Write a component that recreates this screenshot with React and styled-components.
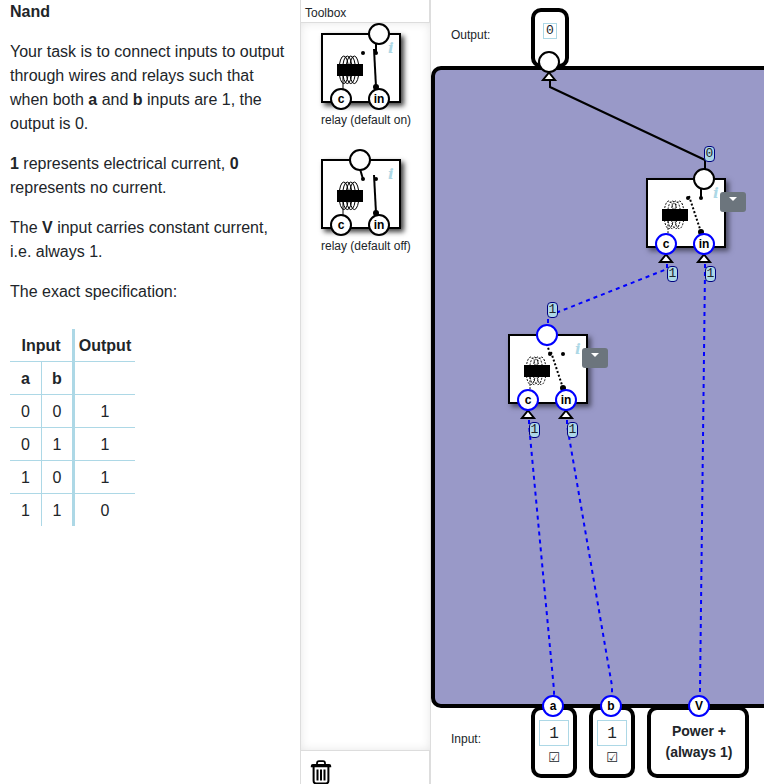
import React from "react";
import styled, { createGlobalStyle } from "styled-components";

const GlobalStyle = createGlobalStyle`
  *, *::before, *::after { box-sizing: border-box; }
  html, body { margin: 0; height: 784px; overflow: hidden; background: #fff; }
  body {
    font-family: "Liberation Sans", Arial, sans-serif;
    font-size: 16px;
    line-height: 24px;
    color: #212529;
  }
`;

const Layout = styled.div`
  display: grid;
  grid-template-columns: 300px 130px 334px;
  width: 764px;
  height: 784px;
  overflow: hidden;
`;

const Instructions = styled.section`
  padding: 0 10px;
`;

const Paragraph = styled.p`
  margin: 0 0 16px;
`;

const TruthTable = styled.table`
  margin-top: 25px;
  width: 125px;
  table-layout: fixed;
  border-collapse: separate;
  border-spacing: 0;
  text-align: center;
`;

const Column = styled.col`
  width: ${(p) => p.$width}px;
`;

const Cell = styled.td`
  height: ${(p) => (p.$last ? 32 : 33)}px;
  padding: 5px 0 3px;
  font-weight: ${(p) => (p.$head ? 700 : 400)};
  border-bottom: ${(p) => (p.$last ? "0" : "1px solid lightblue")};
  border-right: ${(p) => (p.$edge ? `${p.$edge}px solid lightblue` : "0")};
`;

const Toolbox = styled.aside`
  display: flex;
  flex-direction: column;
  border-left: 1px solid #ddd;
`;

const ToolboxTitle = styled.div`
  height: 23px;
  padding: 2px 4px 0;
  font-size: 12px;
  line-height: 22px;
  border-right: 1px solid #ddd;
  border-bottom: 1px solid #ddd;
`;

const ToolList = styled.div`
  flex: none;
  height: 727px;
  display: flex;
  flex-direction: column;
  align-items: flex-start;
  gap: 26px;
  padding: 10px 0 0 20px;
  box-shadow: inset 0 0 10px rgba(0, 0, 0, 0.1);
`;

const Tool = styled.div`
  height: 100px;
  font-size: 12px;
  white-space: nowrap;
`;

const ToolName = styled.div`
  padding-top: 8px;
  line-height: 18px;
`;

const TrashBar = styled.div`
  flex: 1;
  padding: 9px 0 0 9px;
  border-top: 1px solid #ddd;
  border-right: 1px solid #ddd;
  svg { display: block; }
`;

const Workspace = styled.main`
  position: relative;
  display: flex;
  flex-direction: column;
  border-left: 1px solid #ddd;
  overflow: hidden;
`;

const TerminalRow = styled.div`
  display: flex;
  gap: 12px;
  height: ${(p) => p.$height}px;
  padding: ${(p) => p.$top}px 0 0 20px;
`;

const RowLabel = styled.div`
  width: 68px;
  padding-top: ${(p) => p.$top}px;
  font-size: 12px;
  line-height: 18px;
`;

const Terminal = styled.div`
  position: relative;
  flex: none;
  display: flex;
  flex-direction: column;
  align-items: center;
  width: ${(p) => p.$width}px;
  height: ${(p) => p.$height}px;
  padding-top: ${(p) => p.$top}px;
  border: 4px solid #000;
  border-radius: 10px;
  background: #fff;
`;

const InputTerminal = styled(Terminal)`
  margin-top: -2px;
`;

const ValueBox = styled.div`
  width: ${(p) => (p.$small ? 14 : 30)}px;
  height: ${(p) => (p.$small ? 16 : 26)}px;
  border: 1px solid lightblue;
  font-family: "Liberation Mono", monospace;
  font-size: ${(p) => (p.$small ? 13 : 16)}px;
  line-height: ${(p) => (p.$small ? 14 : 26)}px;
  text-align: center;
`;

const Check = styled.div`
  padding-top: 1px;
  font-family: "DejaVu Sans", sans-serif;
  font-size: 13px;
  line-height: 21px;
`;

const PowerLabel = styled.div`
  padding: 1px 0 0 2px;
  font-size: 14px;
  font-weight: 700;
  line-height: 21px;
  text-align: center;
`;

const Canvas = styled.div`
  flex: none;
  width: 500px;
  height: 642px;
  border: 4px solid #000;
  border-radius: 10px;
  background: #9999c8;
`;

const Port = styled.div`
  position: absolute;
  left: ${(p) => p.$x - 11}px;
  top: ${(p) => p.$y - 11}px;
  z-index: 3;
  width: 22px;
  height: 22px;
  border: 2px solid ${(p) => (p.$live ? "#0000ff" : "#000")};
  border-radius: 50%;
  background: #fff;
  color: #000;
  font-size: 12px;
  font-weight: 700;
  line-height: 18px;
  text-align: center;
`;

const RelayBox = styled.div`
  position: relative;
  width: 80px;
  height: 70px;
  border: 2px solid #000;
  background: #fff;
  box-shadow: 3px 3px 5px rgba(0, 0, 0, ${(p) => (p.$placed ? 0.5 : 0.75)});
`;

const RelayArt = styled.svg`
  display: block;
  width: 76px;
  height: 66px;
`;

const Info = styled.span`
  position: absolute;
  left: 65px;
  top: 4px;
  color: lightblue;
  font: italic 700 15px/18px "DejaVu Serif", serif;
`;

const Placed = styled.div`
  position: absolute;
  left: ${(p) => p.$x - 431}px;
  top: ${(p) => p.$y}px;
`;

const MenuButton = styled.button`
  position: absolute;
  left: 72px;
  top: 12px;
  z-index: 4;
  display: flex;
  justify-content: center;
  align-items: flex-start;
  width: 26px;
  height: 20px;
  padding: 5px 0 0;
  border: 0;
  border-radius: 3px;
  background: #6c757d;
  &::after {
    content: "";
    border: 4px solid transparent;
    border-top-color: #fff;
    border-bottom: 0;
  }
`;

const Wires = styled.svg`
  position: absolute;
  left: -1px;
  top: 0;
  z-index: 2;
  pointer-events: none;
`;

const Signal = styled.div`
  position: absolute;
  left: ${(p) => p.$x - 431}px;
  top: ${(p) => p.$y}px;
  z-index: 4;
  display: flex;
  justify-content: center;
  width: 11px;
  height: 16px;
  border: 1px solid #000080;
  border-radius: 4px;
  background: lightblue;
  font: 13px/14px "Liberation Mono", monospace;
`;

function Relay({ kind, energized, outputLive, inputLive, placed }) {
  const onType = kind === "on";
  return (
    <RelayBox $placed={placed}>
      <RelayArt viewBox="2 2 76 66" aria-hidden="true">
        <g fill="none" stroke="#000" strokeWidth="1" strokeDasharray={energized ? "2 1.4" : undefined}>
          {[22.8, 26.3, 29.8, 33.3].map((x, i) => (
            <ellipse key={x} cx={x} cy="36.8" rx="4.7" ry="13.8" strokeDashoffset={i * 1.7} />
          ))}
          <path d="M22 43V58" />
        </g>
        <rect x="16" y="31" width="26" height="12" />
        <circle cx="42" cy="20" r="2" />
        <circle cx="55" cy="20" r="2" />
        <circle cx="55" cy="54" r="3" />
        {onType ? (
          <path d="M55 10V20" stroke="#000" strokeWidth="2" />
        ) : (
          <path
            d="M39 10L42 20"
            stroke="#000"
            strokeWidth="2"
            strokeDasharray={energized ? "2 2" : undefined}
          />
        )}
        {energized ? (
          <path d="M43 18L55 54" stroke="#000" strokeWidth="2" strokeDasharray="2 2" />
        ) : (
          <path d="M53 16L55 54" stroke="#000" strokeWidth="2" />
        )}
      </RelayArt>
      <Info>i</Info>
      <Port $x={onType ? 56 : 37} $y={-1} $live={outputLive} />
      <Port $x={18} $y={64} $live={inputLive}>c</Port>
      <Port $x={56} $y={64} $live={inputLive}>in</Port>
      {placed && <MenuButton aria-label="Relay menu" />}
    </RelayBox>
  );
}

const rows = [
  [0, 0, 1],
  [0, 1, 1],
  [1, 0, 1],
  [1, 1, 0],
];

const signals = [
  [704, 146, 0],
  [667, 266, 1],
  [705, 266, 1],
  [547, 302, 1],
  [529, 422, 1],
  [567, 422, 1],
];

const arrows = [
  [549, 72],
  [666, 254],
  [704, 254],
  [528, 410],
  [566, 410],
];

export default function App() {
  return (
    <>
      <GlobalStyle />
      <Layout>
        <Instructions>
          <Paragraph><b>Nand</b></Paragraph>
          <Paragraph>
            Your task is to connect inputs to output through wires and relays such that when both{" "}
            <b>a</b> and <b>b</b> inputs are 1, the output is 0.
          </Paragraph>
          <Paragraph><b>1</b> represents electrical current, <b>0</b> represents no current.</Paragraph>
          <Paragraph>The <b>V</b> input carries constant current, i.e. always 1.</Paragraph>
          <Paragraph>The exact specification:</Paragraph>
          <TruthTable>
            <colgroup>
              <Column $width={32} />
              <Column $width={33} />
              <Column $width={60} />
            </colgroup>
            <tbody>
              <tr>
                <Cell as="th" colSpan={2} $head $edge={3}>Input</Cell>
                <Cell as="th" $head>Output</Cell>
              </tr>
              <tr>
                <Cell as="th" $head $edge={1}>a</Cell>
                <Cell as="th" $head $edge={3}>b</Cell>
                <Cell />
              </tr>
              {rows.map(([a, b, out], i) => (
                <tr key={i}>
                  <Cell $edge={1} $last={i === 3}>{a}</Cell>
                  <Cell $edge={3} $last={i === 3}>{b}</Cell>
                  <Cell $last={i === 3}>{out}</Cell>
                </tr>
              ))}
            </tbody>
          </TruthTable>
        </Instructions>

        <Toolbox>
          <ToolboxTitle>Toolbox</ToolboxTitle>
          <ToolList>
            <Tool>
              <Relay kind="on" />
              <ToolName>relay (default on)</ToolName>
            </Tool>
            <Tool>
              <Relay kind="off" />
              <ToolName>relay (default off)</ToolName>
            </Tool>
          </ToolList>
          <TrashBar>
            <svg width="22" height="25" viewBox="0 0 22 25" fill="none" stroke="#000" aria-label="Trash">
              <path d="M7 4V3.2Q7 1.2 9 1.2h4Q15 1.2 15 3.2V4" strokeWidth="1.8" />
              <path d="M.8 7.2V6Q.8 4 2.8 4H19.2Q21.2 4 21.2 6V7.2Z" fill="#000" stroke="none" />
              <path d="M3.6 7V21Q3.6 23.4 6 23.4H16Q18.4 23.4 18.4 21V7" strokeWidth="2" />
              <path d="M7.5 9.5V20.5M11 9.5V20.5M14.5 9.5V20.5" strokeWidth="2" />
            </svg>
          </TrashBar>
        </Toolbox>

        <Workspace>
          <TerminalRow $height={66} $top={8}>
            <RowLabel $top={18}>Output:</RowLabel>
            <Terminal $width={38} $height={60} $top={11}>
              <ValueBox $small>0</ValueBox>
              <Port $x={14} $y={50} />
            </Terminal>
          </TerminalRow>
          <Canvas />
          <TerminalRow $height={76} $top={0}>
            <RowLabel $top={22}>Input:</RowLabel>
            {["a", "b"].map((name) => (
              <InputTerminal key={name} $width={46} $height={72} $top={10}>
                <ValueBox>1</ValueBox>
                <Check>☑</Check>
                <Port $x={18} $y={-4} $live>{name}</Port>
              </InputTerminal>
            ))}
            <InputTerminal $width={102} $height={72} $top={10}>
              <PowerLabel>Power +<br />(always 1)</PowerLabel>
              <Port $x={48} $y={-4} $live>V</Port>
            </InputTerminal>
          </TerminalRow>

          <Placed $x={646} $y={178}>
            <Relay kind="on" energized inputLive placed />
          </Placed>
          <Placed $x={508} $y={334}>
            <Relay kind="off" energized inputLive outputLive placed />
          </Placed>

          <Wires width="334" height="784" viewBox="430 0 334 784" fill="none" strokeWidth="2">
            <path d="M550 80V87L705 160V169" stroke="#000" />
            <g stroke="#0000ff" strokeDasharray="4 4">
              <path d="M667 264V269L548 316V325" />
              <path d="M705 264V270L700 690V696" />
              <path d="M529 420V425L554 690V696" />
              <path d="M567 420V425L612 686V696" />
            </g>
            <g fill="#fff" stroke="#000">
              {arrows.map(([x, y]) => (
                <path key={x} d={`M${x} ${y + 0.5}L${x + 6} ${y + 8}H${x - 6}Z`} />
              ))}
            </g>
          </Wires>
          {signals.map(([x, y, value]) => (
            <Signal key={`${x}-${y}`} $x={x} $y={y}>{value}</Signal>
          ))}
        </Workspace>
      </Layout>
    </>
  );
}
